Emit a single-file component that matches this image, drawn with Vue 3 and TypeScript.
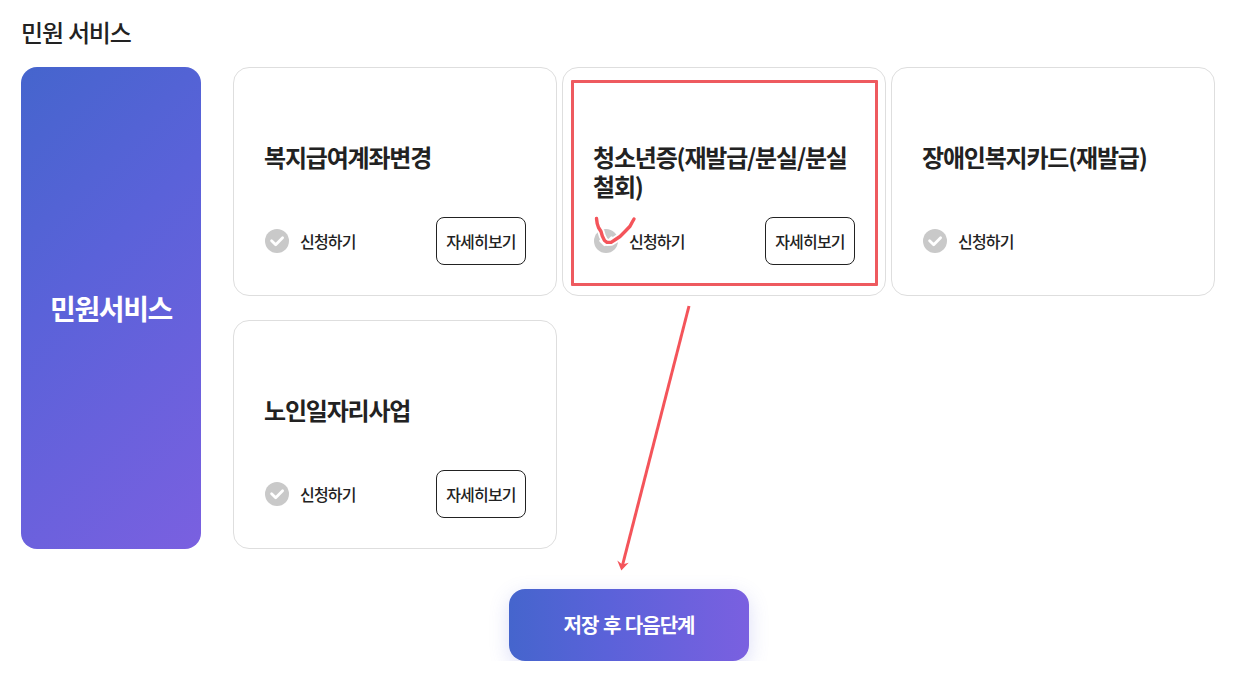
<script setup lang="ts">
import { ref } from "vue";

interface Service {
  id: number;
  title: string;
  detail: boolean;
  marked: boolean;
}

const services = ref<Service[]>([
  { id: 1, title: "복지급여계좌변경", detail: true, marked: false },
  { id: 2, title: "청소년증(재발급/분실/분실철회)", detail: true, marked: true },
  { id: 3, title: "장애인복지카드(재발급)", detail: false, marked: false },
  { id: 4, title: "노인일자리사업", detail: true, marked: false },
]);

const tick =
  "M596.5 218.5L597.2 223.5L598.5 227.5L601 231.5L602.3 236L604.5 240.5L607 242.4L611.5 242.2L615.5 239.5L620 236.5L625 231.5L630 226.3L632 222.5L634 219";
</script>

<template>
  <main class="page">
    <h2 class="page-title">민원 서비스</h2>

    <section class="services">
      <div class="category">민원서비스</div>
      <ul class="card-list">
        <li v-for="service in services" :key="service.id" class="card">
          <h3 class="card-title">{{ service.title }}</h3>
          <div class="card-bottom">
            <div class="apply">
              <svg class="check" viewBox="0 0 24 24">
                <circle cx="12" cy="12" r="12" fill="#c9c9c9" />
                <path
                  d="M6.6 11.7l4.1 4.1 6.9-7"
                  fill="none"
                  stroke="#fff"
                  stroke-width="2.8"
                  stroke-linecap="round"
                  stroke-linejoin="round"
                />
              </svg>
              <span>신청하기</span>
            </div>
            <button v-if="service.detail" type="button" class="detail-btn">자세히보기</button>
          </div>
          <div v-if="service.marked" class="mark-box"></div>
        </li>
      </ul>
    </section>

    <div class="actions">
      <button type="button" class="next-btn">저장 후 다음단계</button>
    </div>

    <!-- hand-drawn tick and arrow over the cards -->
    <svg class="marks" viewBox="0 0 1235 680">
      <path class="stroke halo" :d="tick" />
      <path class="stroke" :d="tick" />
      <path class="stroke line" d="M689 306L622.3 566" />
      <path class="head" d="M621.3 570.5L617.3 560.5L622.3 564.5L628.7 562.8Z" />
    </svg>
  </main>
</template>

<style>
body {
  margin: 0;
  background: #fff;
}
</style>

<style scoped>
.page {
  position: relative;
  box-sizing: border-box;
  width: 1235px;
  height: 680px;
  padding: 17px 20px 0 21px;
  overflow: hidden;
  background: #fff;
  color: #222;
  font-family: "Noto Sans CJK KR", "Noto Sans", sans-serif;
}

.page-title {
  margin: 0 0 21px;
  font-size: 24px;
  font-weight: 500;
  line-height: 29px;
  letter-spacing: -0.05em;
  word-spacing: 1px;
}

.services {
  display: flex;
  gap: 32px;
}

.category {
  display: flex;
  align-items: center;
  justify-content: center;
  width: 180px;
  height: 482px;
  border-radius: 16px;
  background: linear-gradient(135deg, #4565cd 0%, #5a62d9 40%, #7a60e0 100%);
  color: #fff;
  font-size: 28px;
  font-weight: 700;
  letter-spacing: -0.05em;
}

.card-list {
  display: grid;
  grid-template-columns: repeat(3, 324px);
  grid-auto-rows: 229px;
  gap: 24px 5px;
  margin: 0;
  padding: 0;
  list-style: none;
}

.card {
  position: relative;
  display: flex;
  flex-direction: column;
  justify-content: space-between;
  box-sizing: border-box;
  padding: 74px 30px 30px;
  border: 1px solid #dedede;
  border-radius: 16px;
}

.card-title {
  margin: 0;
  font-size: 24px;
  font-weight: 700;
  line-height: 29px;
  letter-spacing: -0.05em;
  word-break: break-all;
}

.card-bottom {
  display: flex;
  align-items: center;
  justify-content: space-between;
  height: 48px;
}

.apply {
  display: flex;
  align-items: center;
  gap: 11px;
  font-size: 16px;
  font-weight: 500;
  letter-spacing: -0.05em;
}

.check {
  width: 24px;
  height: 24px;
  margin: 0 0 0 1px;
}

.detail-btn {
  width: 90px;
  height: 48px;
  padding: 0;
  border: 1px solid #222;
  border-radius: 8px;
  background: #fff;
  color: #222;
  font-family: inherit;
  font-size: 16px;
  font-weight: 500;
  letter-spacing: -0.05em;
}

.mark-box {
  position: absolute;
  top: 12px;
  left: 8px;
  width: 301px;
  height: 200px;
  border: 3px solid #ee5a5f;
  border-radius: 1px;
}

/* the shadow is cut off along the bottom edge of the row */
.actions {
  display: flex;
  justify-content: center;
  margin-top: 20px;
  padding: 20px 0 0 22px;
  overflow: hidden;
}

.next-btn {
  width: 240px;
  height: 72px;
  padding: 0 0 1px;
  border: none;
  border-radius: 16px;
  background: linear-gradient(90deg, #4565cd 0%, #5a62d9 40%, #7a60e0 100%);
  box-shadow: 0 6px 20px rgba(90, 98, 217, 0.22);
  color: #fff;
  font-family: inherit;
  font-size: 20px;
  font-weight: 700;
  letter-spacing: -0.05em;
  word-spacing: 1px;
}

.marks {
  position: absolute;
  top: 0;
  left: 0;
  width: 1235px;
  height: 680px;
  pointer-events: none;
}

.stroke {
  fill: none;
  stroke: #f4545a;
  stroke-width: 3.4;
  stroke-linecap: round;
  stroke-linejoin: round;
}

.halo {
  stroke: #fff;
  stroke-width: 7;
}

.line {
  stroke-width: 3;
  stroke-linecap: butt;
}

.head {
  fill: #f4545a;
}
</style>
